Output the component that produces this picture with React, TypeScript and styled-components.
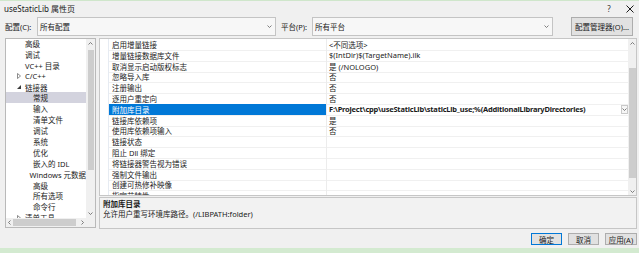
import React from "react";
import styled, { createGlobalStyle } from "styled-components";

const GlobalStyle = createGlobalStyle`
  html, body {
    margin: 0;
    padding: 0;
    background: #f0f0f0;
  }
  body {
    font-family: "Noto Sans", "Noto Sans CJK SC", sans-serif;
    font-size: 7.5px;
    color: #1a1a1a;
  }
`;

const Window = styled.div`
  width: 639px;
  height: 253px;
  display: flex;
  flex-direction: column;
  background: #f0f0f0;
  overflow: hidden;
`;

const TopAccent = styled.div`
  flex: none;
  height: 1px;
  background: #cfe6cb;
`;

const TitleBar = styled.div`
  flex: none;
  height: 15px;
  display: flex;
  align-items: center;
  justify-content: space-between;
  padding: 0 4px 0 4px;
  font-size: 8px;
`;

const TitleActions = styled.div`
  display: flex;
  align-items: center;
  gap: 11px;
`;

const TitleButton = styled.div`
  flex: none;
  width: 10px;
  height: 10px;
  display: flex;
  align-items: center;
  justify-content: center;
  color: #333;
`;

const ConfigRow = styled.div`
  flex: none;
  height: 19px;
  margin-top: 1px;
  display: flex;
  align-items: center;
  padding-left: 5px;
`;

const FieldLabel = styled.span<{ $width: number; $gap?: number }>`
  width: ${({ $width }) => $width}px;
  margin-left: ${({ $gap }) => $gap ?? 0}px;
`;

const Combo = styled.div<{ $width: number }>`
  box-sizing: border-box;
  width: ${({ $width }) => $width}px;
  height: 19px;
  display: flex;
  align-items: center;
  justify-content: space-between;
  padding: 0 3px 0 2px;
  background: #f7f7f7;
  border: 1px solid #c4c4c4;
`;

const PushButton = styled.div<{ $width: number; $default?: boolean; $height?: number; $gap?: number }>`
  box-sizing: border-box;
  width: ${({ $width }) => $width}px;
  height: ${({ $height }) => $height ?? 12}px;
  margin-left: ${({ $gap }) => $gap ?? 0}px;
  display: flex;
  align-items: center;
  justify-content: center;
  background: #e1e1e1;
  border: 1px solid ${({ $default }) => ($default ? "#0078d7" : "#adadad")};
  white-space: nowrap;
`;

const Body = styled.div`
  flex: none;
  height: 191px;
  margin-top: 2px;
  padding: 0 2px 0 5px;
  display: flex;
  gap: 3px;
`;

const TreePanel = styled.div`
  box-sizing: border-box;
  width: 91px;
  height: 190px;
  border: 1px solid #b9b9b9;
  background: #fff;
  display: grid;
  grid-template-columns: 1fr 9px;
  grid-template-rows: 1fr 9px;
`;

const TreeList = styled.div`
  overflow: hidden;
  margin-top: -1px;
`;

const TreeRow = styled.div<{ $level: number; $selected?: boolean }>`
  height: 10.9px;
  display: flex;
  align-items: center;
  padding-left: ${({ $level }) => ($level === 1 ? 10 : 18)}px;
  background: ${({ $selected }) => ($selected ? "#d3d3de" : "transparent")};
  white-space: nowrap;
`;

const ToggleSlot = styled.span`
  width: 6px;
  margin-right: 3px;
  display: flex;
  align-items: center;
  justify-content: center;
`;

const ScrollV = styled.div`
  background: #f0f0f0;
  display: flex;
  flex-direction: column;
  align-items: center;
`;

const ScrollH = styled.div`
  background: #f0f0f0;
  display: flex;
  align-items: center;
`;

const ArrowBox = styled.div<{ $size: number }>`
  flex: none;
  width: ${({ $size }) => $size}px;
  height: ${({ $size }) => $size}px;
  display: flex;
  align-items: center;
  justify-content: center;
`;

const ThumbV = styled.div<{ $top: number; $height: number; $width: number }>`
  width: ${({ $width }) => $width}px;
  height: ${({ $height }) => $height}px;
  margin-top: ${({ $top }) => $top}px;
  background: #cdcdcd;
`;

const ThumbH = styled.div<{ $width: number }>`
  width: ${({ $width }) => $width}px;
  height: 7px;
  background: #cdcdcd;
`;

const Spacer = styled.div`
  flex: 1;
`;

const Corner = styled.div`
  background: #f0f0f0;
`;

const RightColumn = styled.div`
  flex: 1;
  display: flex;
  flex-direction: column;
  gap: 1px;
`;

const GridPanel = styled.div`
  box-sizing: border-box;
  flex: none;
  height: 158px;
  border: 1px solid #c6c6c6;
  background: #fff;
  display: flex;
`;

const GridRows = styled.div`
  flex: 1;
  overflow: hidden;
`;

const GridRow = styled.div`
  height: 10.8px;
  display: grid;
  grid-template-columns: 9px 218px 1fr;
`;

const Gutter = styled.div`
  border-right: 1px solid #e6ebf2;
`;

const NameCell = styled.div<{ $selected?: boolean }>`
  box-sizing: border-box;
  display: flex;
  align-items: center;
  padding-left: 3px;
  border-right: 1px solid #ececec;
  border-bottom: 1px solid #f0f0f0;
  background: ${({ $selected }) => ($selected ? "#0078d7" : "transparent")};
  color: ${({ $selected }) => ($selected ? "#fff" : "inherit")};
  white-space: nowrap;
`;

const ValueCell = styled.div<{ $bold?: boolean }>`
  box-sizing: border-box;
  display: flex;
  align-items: center;
  justify-content: space-between;
  padding: 0 0 0 2px;
  border-bottom: 1px solid #f0f0f0;
  font-weight: ${({ $bold }) => ($bold ? 700 : 400)};
  letter-spacing: ${({ $bold }) => ($bold ? "-0.22px" : "0")};
  white-space: nowrap;
  overflow: hidden;
`;

const DropButton = styled.div`
  box-sizing: border-box;
  width: 7px;
  height: 9px;
  border: 1px solid #c9c9c9;
  background: #f6f6f6;
  display: flex;
  align-items: center;
  justify-content: center;
`;

const GridScroll = styled(ScrollV)`
  width: 8px;
`;

const DescPanel = styled.div`
  box-sizing: border-box;
  flex: 1;
  border: 1px solid #c6c6c6;
  background: #f2f2f2;
  padding: 1px 3px;
  line-height: 10px;
`;

const DescTitle = styled.div`
  font-weight: 700;
`;

const ButtonRow = styled.div`
  flex: none;
  height: 12px;
  margin-top: 4px;
  display: flex;
  justify-content: flex-end;
  gap: 6px;
  padding-right: 2px;
`;

const BottomBand = styled.div`
  flex: none;
  height: 5px;
  background: #d3ead0;
`;

type Dir = "up" | "down" | "left" | "right";

const Chevron = ({ dir = "down", color = "#606060" }: { dir?: Dir; color?: string }) => {
  const rot = { down: 0, up: 180, left: 90, right: -90 }[dir];
  return (
    <svg width="5" height="3" viewBox="0 0 5 3" style={{ transform: `rotate(${rot}deg)` }}>
      <polyline points="0.5,0.5 2.5,2.5 4.5,0.5" fill="none" stroke={color} strokeWidth="0.8" />
    </svg>
  );
};

const CloseIcon = () => (
  <svg width="8" height="8" viewBox="0 0 8 8" style={{ display: "block" }}>
    <line x1="0.5" y1="0.5" x2="7.5" y2="7.5" stroke="#1a1a1a" strokeWidth="1" />
    <line x1="7.5" y1="0.5" x2="0.5" y2="7.5" stroke="#1a1a1a" strokeWidth="1" />
  </svg>
);

const Toggle = ({ open }: { open: boolean }) =>
  open ? (
    <svg width="4" height="4" viewBox="0 0 4 4">
      <polygon points="4,0 4,4 0,4" fill="#3a3a3a" />
    </svg>
  ) : (
    <svg width="4" height="6" viewBox="0 0 4 6">
      <polygon points="0.5,0.5 3.5,3 0.5,5.5" fill="none" stroke="#707070" strokeWidth="0.8" />
    </svg>
  );

type TreeItem = { label: string; level: number; toggle?: "open" | "closed"; selected?: boolean };

const TREE: TreeItem[] = [
  { label: "高级", level: 1 },
  { label: "调试", level: 1 },
  { label: "VC++ 目录", level: 1 },
  { label: "C/C++", level: 1, toggle: "closed" },
  { label: "链接器", level: 1, toggle: "open" },
  { label: "常规", level: 2, selected: true },
  { label: "输入", level: 2 },
  { label: "清单文件", level: 2 },
  { label: "调试", level: 2 },
  { label: "系统", level: 2 },
  { label: "优化", level: 2 },
  { label: "嵌入的 IDL", level: 2 },
  { label: "Windows 元数据", level: 2 },
  { label: "高级", level: 2 },
  { label: "所有选项", level: 2 },
  { label: "命令行", level: 2 },
  { label: "清单工具", level: 1, toggle: "closed" },
];

type Prop = { name: string; value?: string; selected?: boolean };

const PROPS: Prop[] = [
  { name: "启用增量链接", value: "<不同选项>" },
  { name: "增量链接数据库文件", value: "$(IntDir)$(TargetName).ilk" },
  { name: "取消显示启动版权标志", value: "是 (/NOLOGO)" },
  { name: "忽略导入库", value: "否" },
  { name: "注册输出", value: "否" },
  { name: "逐用户重定向", value: "否" },
  {
    name: "附加库目录",
    value: "F:\\Project\\cpp\\useStaticLib\\staticLib_use;%(AdditionalLibraryDirectories)",
    selected: true,
  },
  { name: "链接库依赖项", value: "是" },
  { name: "使用库依赖项输入", value: "否" },
  { name: "链接状态" },
  { name: "阻止 Dll 绑定" },
  { name: "将链接器警告视为错误" },
  { name: "强制文件输出" },
  { name: "创建可热修补映像" },
  { name: "指定节特性" },
];

const App = () => (
  <>
    <GlobalStyle />
    <Window>
      <TopAccent />
      <TitleBar>
        <span>useStaticLib 属性页</span>
        <TitleActions>
          <TitleButton>?</TitleButton>
          <TitleButton>
            <CloseIcon />
          </TitleButton>
        </TitleActions>
      </TitleBar>

      <ConfigRow>
        <FieldLabel $width={32}>配置(C):</FieldLabel>
        <Combo $width={239}>
          <span>所有配置</span>
          <Chevron />
        </Combo>
        <FieldLabel $width={31} $gap={5}>
          平台(P):
        </FieldLabel>
        <Combo $width={241}>
          <span>所有平台</span>
          <Chevron />
        </Combo>
        <PushButton $width={62} $height={19} $gap={18}>
          配置管理器(O)...
        </PushButton>
      </ConfigRow>

      <Body>
        <TreePanel>
          <TreeList>
            {TREE.map((item, i) => (
              <TreeRow key={i} $level={item.level} $selected={item.selected}>
                <ToggleSlot>{item.toggle && <Toggle open={item.toggle === "open"} />}</ToggleSlot>
                {item.label}
              </TreeRow>
            ))}
          </TreeList>
          <ScrollV>
            <ArrowBox $size={9}>
              <Chevron dir="up" />
            </ArrowBox>
            <ThumbV $top={2} $height={120} $width={6} />
            <Spacer />
            <ArrowBox $size={9}>
              <Chevron dir="down" />
            </ArrowBox>
          </ScrollV>
          <ScrollH>
            <ArrowBox $size={7}>
              <Chevron dir="left" />
            </ArrowBox>
            <ThumbH $width={63} />
            <Spacer />
            <ArrowBox $size={7}>
              <Chevron dir="right" />
            </ArrowBox>
          </ScrollH>
          <Corner />
        </TreePanel>

        <RightColumn>
          <GridPanel>
            <GridRows>
              {PROPS.map((p) => (
                <GridRow key={p.name}>
                  <Gutter />
                  <NameCell $selected={p.selected}>{p.name}</NameCell>
                  <ValueCell $bold={p.selected}>
                    <span>{p.value}</span>
                    {p.selected && (
                      <DropButton>
                        <Chevron />
                      </DropButton>
                    )}
                  </ValueCell>
                </GridRow>
              ))}
            </GridRows>
            <GridScroll>
              <ArrowBox $size={8}>
                <Chevron dir="up" />
              </ArrowBox>
              <ThumbV $top={21} $height={110} $width={7} />
              <Spacer />
              <ArrowBox $size={8}>
                <Chevron dir="down" />
              </ArrowBox>
            </GridScroll>
          </GridPanel>
          <DescPanel>
            <DescTitle>附加库目录</DescTitle>
            <div>允许用户重写环境库路径。(/LIBPATH:folder)</div>
          </DescPanel>
        </RightColumn>
      </Body>

      <ButtonRow>
        <PushButton $width={31} $default>
          确定
        </PushButton>
        <PushButton $width={31}>取消</PushButton>
        <PushButton $width={32}>应用(A)</PushButton>
      </ButtonRow>
      <Spacer />
      <BottomBand />
    </Window>
  </>
);

export default App;
